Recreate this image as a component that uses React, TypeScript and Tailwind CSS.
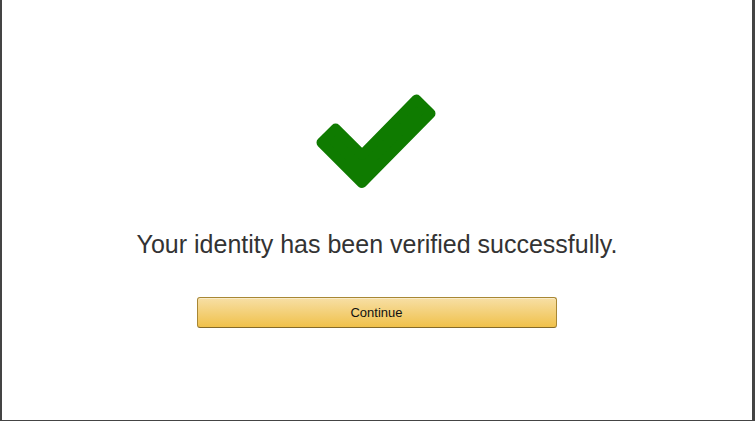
import React from "react";

export default function App() {
  return (
    <div className="w-[755px] h-[421px] bg-[#444444] flex items-start" style={{ fontFamily: '"Liberation Sans", Arial, sans-serif' }}>
      <div className="ml-[2px] mr-[3px] w-[750px] h-[420px] bg-white flex flex-col items-center">
        <svg width="750" height="200" viewBox="2 0 750 200" className="mt-0 shrink-0">
          <polygon
            points="321.5,142.6 335.6,128.5 362,154.9 416.4,99.5 430.5,113.6 362,183.1"
            fill="#0f7b00"
            stroke="#0f7b00"
            strokeWidth="10"
            strokeLinejoin="round"
          />
        </svg>
        <div className="mt-[28px] text-[25px] leading-[32px] text-[#333333]">
          Your identity has been verified successfully.
        </div>
        <button className="mt-[37px] w-[360px] h-[31px] rounded-[3px] border border-[#a88734] border-b-[#846a29] bg-[linear-gradient(to_bottom,#f7dfa5,#f0c14b)] text-[13px] text-[#111111] flex items-center justify-center shadow-[inset_0_1px_0_rgba(255,255,255,0.4)] ml-[-1px]">
          Continue
        </button>
      </div>
    </div>
  );
}
